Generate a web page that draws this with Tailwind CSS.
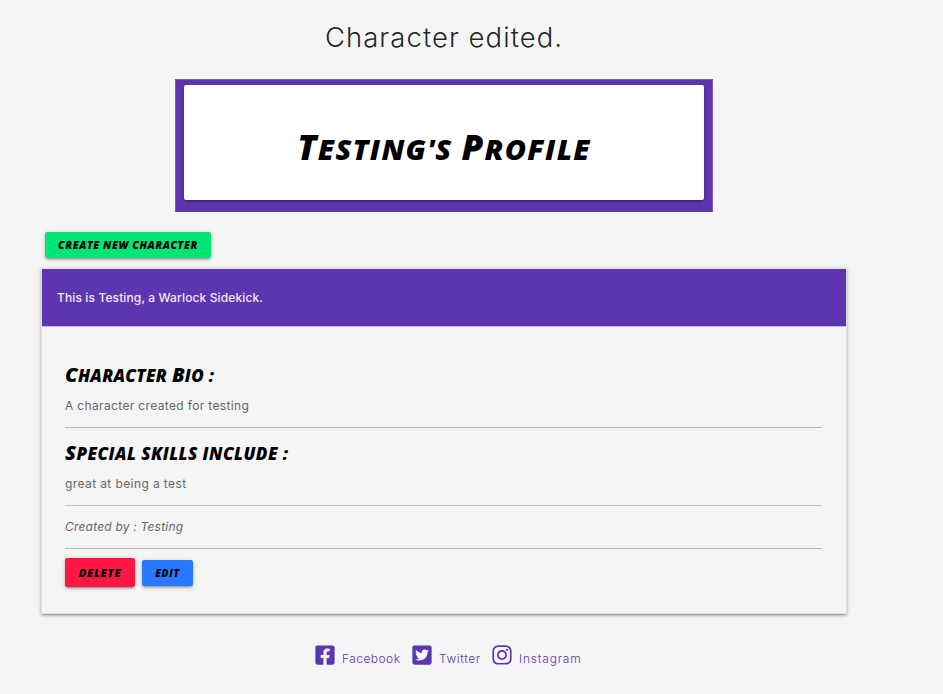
<!DOCTYPE html>
<html lang="en">
<head>
<meta charset="utf-8">
<title>Testing's Profile</title>
<script src="https://cdn.jsdelivr.net/npm/@tailwindcss/browser@4"></script>
</head>
<body class="min-h-screen overflow-hidden bg-[#f5f5f5] font-[Inter,sans-serif] text-black/87">
<div class="ml-[41px] w-[806px]">
  <h4 class="h-[79px] pt-[17px] text-center text-[27.5px] leading-[40px] font-light tracking-[1.05px] whitespace-nowrap">Character edited.</h4>

  <header class="mx-auto h-[133px] w-[538px] border border-[#7b5bb5] border-b-[#5e35b1] bg-[#5e35b1] px-2 pt-[5px]">
    <div class="h-[115px] rounded-[2px] bg-white pt-[37px] text-center shadow-[0_2px_2px_0_rgba(0,0,0,0.14),0_3px_1px_-2px_rgba(0,0,0,0.12),0_1px_5px_0_rgba(0,0,0,0.2)]">
      <h1 class="font-['Open_Sans',sans-serif] text-[29px] leading-[50px] font-extrabold whitespace-nowrap text-black uppercase italic tracking-[1.3px]"><span class="text-[35px]">T</span>esting's <span class="text-[35px]">P</span>rofile</h1>
    </div>
  </header>

  <main>
    <div class="flex h-[56px] pt-5 pl-1">
      <a class="h-[26px] w-[166px] rounded-[2px] bg-[#00e676] text-center font-['Open_Sans',sans-serif] text-[10.5px] leading-[26px] font-extrabold tracking-[0.6px] whitespace-nowrap text-black uppercase italic shadow-[0_2px_2px_0_rgba(0,0,0,0.14),0_3px_1px_-2px_rgba(0,0,0,0.12),0_1px_5px_0_rgba(0,0,0,0.2)]">Create new character</a>
    </div>
    <section class="h-[346px] border border-[#ddd] shadow-[0_2px_2px_0_rgba(0,0,0,0.14),0_3px_1px_-2px_rgba(0,0,0,0.12),0_1px_5px_0_rgba(0,0,0,0.2)]">
      <div class="h-[58px] border-b border-[#c5b8de] bg-[#5e35b1] pl-[15px] text-[12px] leading-[57px] font-medium tracking-[0.12px] whitespace-nowrap text-[#f0eaf8]">This is Testing, a Warlock Sidekick.</div>
      <div class="pt-[33px] pr-6 pl-[23px] text-[12px] leading-[20px] text-[#666]">
        <h2 class="h-[36px] font-['Open_Sans',sans-serif] text-[17px] leading-[30px] font-extrabold tracking-[0.3px] whitespace-nowrap text-black uppercase italic"><span class="text-[20px]">C</span>haracter <span class="text-[20px]">B</span>io :</h2>
        <p class="h-[31px] tracking-[0.35px] whitespace-nowrap">A character created for testing</p>
        <hr class="border-[#b4b4b4]">
        <h2 class="mt-[10px] h-[36px] font-['Open_Sans',sans-serif] text-[17px] leading-[30px] font-extrabold tracking-[0.44px] whitespace-nowrap text-black uppercase italic"><span class="text-[20px]">S</span>pecial skills include :</h2>
        <p class="h-[31px] tracking-[0.4px] whitespace-nowrap">great at being a test</p>
        <hr class="border-[#c4c4c4]">
        <p class="mt-[11px] h-[31px] tracking-[0.2px] whitespace-nowrap italic">Created by : Testing</p>
        <hr class="border-[#b4b4b4]">
        <div class="mt-[9px] flex items-center gap-[7px] font-['Open_Sans',sans-serif] font-extrabold whitespace-nowrap text-black uppercase italic">
          <button class="h-[29px] w-[70px] rounded-[2px] bg-[#ff1744] text-[11px] tracking-[0.8px] uppercase italic shadow-[0_2px_2px_0_rgba(0,0,0,0.14),0_3px_1px_-2px_rgba(0,0,0,0.12),0_1px_5px_0_rgba(0,0,0,0.2)]">Delete</button>
          <a class="h-[26px] w-[51px] rounded-[2px] bg-[#2979ff] text-center text-[10px] leading-[26px] tracking-[0.8px] shadow-[0_2px_2px_0_rgba(0,0,0,0.14),0_3px_1px_-2px_rgba(0,0,0,0.12),0_1px_5px_0_rgba(0,0,0,0.2)]">Edit</a>
        </div>
      </div>
    </section>
  </main>

  <footer class="mt-[30px] flex pl-[274px] text-[12px] leading-[30px] font-light whitespace-nowrap text-[#5e35b1]">
    <a class="flex w-[97px] gap-[7px] tracking-[0.45px]"><svg class="h-[22px] w-[20px] fill-current" viewBox="0 0 448 512"><path d="M400 32H48A48 48 0 0 0 0 80v352a48 48 0 0 0 48 48h137.25V327.69h-63V256h63v-54.64c0-62.15 37-96.48 93.67-96.48 27.14 0 55.52 4.84 55.52 4.84v61h-31.27c-30.81 0-40.42 19.12-40.42 38.73V256h68.78l-11 71.69h-57.78V480H400a48 48 0 0 0 48-48V80a48 48 0 0 0-48-48z"/></svg>Facebook</a>
    <a class="flex w-[80px] gap-[7px] tracking-[0.6px]"><svg class="h-[22px] w-[20px] fill-current" viewBox="0 0 448 512"><path d="M400 32H48C21.5 32 0 53.5 0 80v352c0 26.500 21.500 48 48 48h352c26.500 0 48-21.500 48-48V80c0-26.500-21.500-48-48-48zm-48.900 158.800c.2 2.800.2 5.700.2 8.500 0 86.700-66 186.600-186.600 186.600-37.200 0-71.700-10.800-100.700-29.400 5.300.6 10.400.8 15.800.8 30.700 0 58.900-10.400 81.400-28-28.800-.6-53-19.500-61.300-45.500 10.100 1.500 19.200 1.500 29.600-1.200-30-6.100-52.500-32.500-52.500-64.400v-.8c8.700 4.900 18.900 7.900 29.600 8.300a65.447 65.447 0 0 1-29.200-54.600c0-12.200 3.200-23.400 8.900-33.100 32.300 39.800 80.800 65.800 135.200 68.600-9.300-44.500 24-80.600 64-80.600 18.900 0 35.900 7.900 47.900 20.700 14.800-2.800 29-8.300 41.600-15.800-4.900 15.200-15.200 28-28.800 36.100 13.200-1.400 26-5.100 37.800-10.200-8.900 13.100-20.100 24.700-32.900 34z"/></svg>Twitter</a>
    <a class="flex gap-[7px] tracking-[0.8px]"><svg class="h-[22px] w-[20px] fill-current" viewBox="0 0 448 512"><path d="M224.100 141c-63.600 0-114.900 51.300-114.900 114.900s51.300 114.900 114.900 114.900S339 319.500 339 255.900 287.700 141 224.100 141zm0 189.600c-41.100 0-74.700-33.500-74.700-74.700s33.500-74.700 74.700-74.700 74.700 33.500 74.700 74.700-33.600 74.700-74.700 74.700zm146.400-194.300c0 14.900-12 26.800-26.800 26.800-14.900 0-26.800-12-26.800-26.800s12-26.800 26.800-26.800 26.800 12 26.800 26.800zm76.100 27.200c-1.700-35.900-9.900-67.700-36.200-93.900-26.200-26.200-58-34.400-93.900-36.200-37-2.100-147.900-2.100-184.900 0-35.800 1.700-67.600 9.900-93.900 36.100s-34.400 58-36.200 93.900c-2.100 37-2.100 147.900 0 184.900 1.700 35.900 9.900 67.700 36.200 93.900s58 34.400 93.900 36.200c37 2.100 147.900 2.100 184.900 0 35.900-1.700 67.700-9.900 93.900-36.200 26.200-26.200 34.400-58 36.200-93.900 2.100-37 2.100-147.800 0-184.800zM398.800 388c-7.800 19.600-22.900 34.700-42.600 42.600-29.500 11.700-99.500 9-132.100 9s-102.700 2.600-132.100-9c-19.600-7.800-34.700-22.900-42.600-42.600-11.700-29.500-9-99.500-9-132.100s-2.600-102.700 9-132.100c7.800-19.600 22.900-34.700 42.600-42.600 29.500-11.700 99.500-9 132.100-9s102.700-2.600 132.100 9c19.600 7.800 34.700 22.900 42.600 42.600 11.700 29.500 9 99.500 9 132.100s2.700 102.700-9 132.100z"/></svg>Instagram</a>
  </footer>
</div>
</body>
</html>
